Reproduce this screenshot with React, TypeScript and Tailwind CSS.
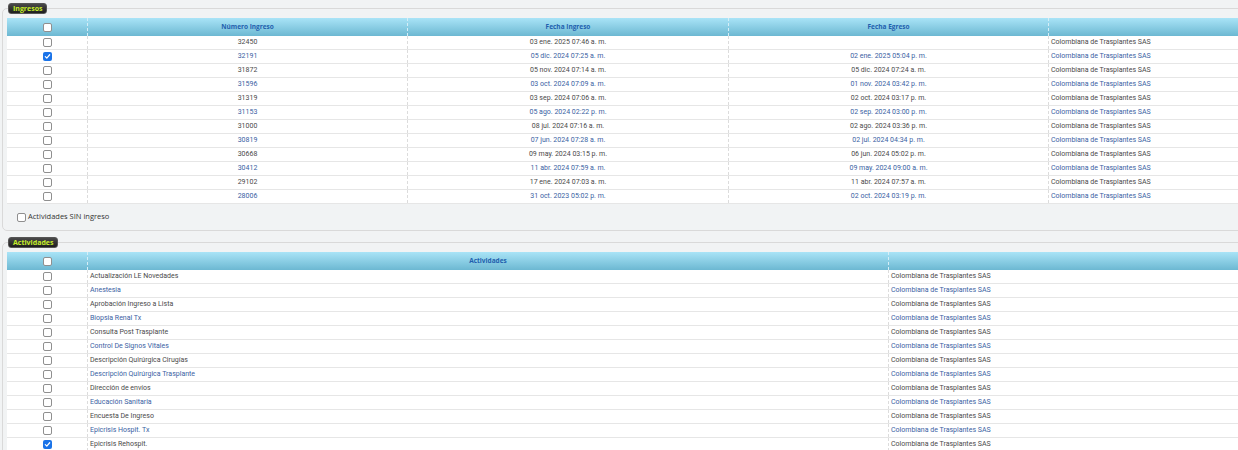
import React from "react";

const ingresos: [string, string, string, boolean][] = [
  ["32450", "03 ene. 2025 07:46 a. m.", "", false],
  ["32191", "05 dic. 2024 07:25 a. m.", "02 ene. 2025 05:04 p. m.", true],
  ["31872", "05 nov. 2024 07:14 a. m.", "05 dic. 2024 07:24 a. m.", false],
  ["31596", "03 oct. 2024 07:09 a. m.", "01 nov. 2024 03:42 p. m.", false],
  ["31319", "03 sep. 2024 07:06 a. m.", "02 oct. 2024 03:17 p. m.", false],
  ["31153", "05 ago. 2024 02:22 p. m.", "02 sep. 2024 03:00 p. m.", false],
  ["31000", "08 jul. 2024 07:16 a. m.", "02 ago. 2024 03:36 p. m.", false],
  ["30819", "07 jun. 2024 07:28 a. m.", "02 jul. 2024 04:34 p. m.", false],
  ["30668", "09 may. 2024 03:15 p. m.", "06 jun. 2024 05:02 p. m.", false],
  ["30412", "11 abr. 2024 07:59 a. m.", "09 may. 2024 09:00 a. m.", false],
  ["29102", "17 ene. 2024 07:03 a. m.", "11 abr. 2024 07:57 a. m.", false],
  ["28006", "31 oct. 2023 05:02 p. m.", "02 oct. 2024 03:19 p. m.", false],
];

const actividades: [string, boolean][] = [
  ["Actualización LE Novedades", false],
  ["Anestesia", false],
  ["Aprobación Ingreso a Lista", false],
  ["Biopsia Renal Tx", false],
  ["Consulta Post Trasplante", false],
  ["Control De Signos Vitales", false],
  ["Descripción Quirúrgica Cirugías", false],
  ["Descripción Quirúrgica Trasplante", false],
  ["Dirección de envíos", false],
  ["Educación Sanitaria", false],
  ["Encuesta De Ingreso", false],
  ["Epicrisis Hospit. Tx", false],
  ["Epicrisis Rehospit.", true],
];

function Check({ checked }: { checked?: boolean }) {
  if (checked) {
    return (
      <span className="inline-flex h-[9px] w-[9px] items-center justify-center rounded-[2px] bg-[#1a73e8]">
        <svg width="7" height="7" viewBox="0 0 8 8">
          <path d="M1.5 4.2 L3.2 5.8 L6.5 2" stroke="white" strokeWidth="1.4" fill="none" strokeLinecap="round" strokeLinejoin="round" />
        </svg>
      </span>
    );
  }
  return <span className="inline-block h-[9px] w-[9px] rounded-[2px] border border-[#8f8f8f] bg-white" />;
}

const sep = "border-l border-dashed border-[#dcdcdc]";
const hsep = "border-l border-dashed border-[#d6eef7]";

function Legend({ text }: { text: string }) {
  return (
    <legend className="ml-[1px] rounded-[3px] border border-[#555] bg-gradient-to-b from-[#4a4a4a] to-[#1e1e1e] px-[4px] text-[7px] font-bold leading-[9px] text-[#c6ef2a] [font-family:'Open_Sans',sans-serif]">
      {text}
    </legend>
  );
}

export default function App() {
  return (
    <div className="h-[450px] w-[1238px] overflow-hidden bg-[#f1f3f4] pl-[2px] pt-[3px] [font-family:Roboto,'Liberation_Sans',sans-serif]">
      <fieldset className="w-[1320px] rounded-tl-[5px] rounded-bl-[5px] border border-[#d9d9d9] pl-[4px] pt-[4px]">
        <Legend text="Ingresos" />
        <div className="w-[1300px]">
          <div className="grid h-[18px] grid-cols-[80px_320px_321px_320px_1fr] bg-gradient-to-b from-[#a9e4f7] to-[#6cb8d2] text-[6.5px] font-bold text-[#1f5fae] [font-family:'Open_Sans',sans-serif]">
            <div className="flex items-center justify-center"><Check /></div>
            <div className={`flex items-center justify-center ${hsep}`}>Número Ingreso</div>
            <div className={`flex items-center justify-center ${hsep}`}>Fecha Ingreso</div>
            <div className={`flex items-center justify-center ${hsep}`}>Fecha Egreso</div>
            <div className={hsep}></div>
          </div>
          {ingresos.map(([n, fi, fe, c], i) => {
            const color = i % 2 === 1 ? "text-[#3a62a3]" : "text-[#4a4a4a]";
            return (
              <div key={n} className={`grid h-[14px] grid-cols-[80px_320px_321px_320px_1fr] border-b border-[#e6e6e6] bg-white text-[7px] ${color}`}>
                <div className="flex items-center justify-center"><Check checked={c} /></div>
                <div className={`flex items-center justify-center ${sep}`}>{n}</div>
                <div className={`flex items-center justify-center ${sep}`}>{fi}</div>
                <div className={`flex items-center justify-center ${sep}`}>{fe}</div>
                <div className={`flex items-center pl-[2px] ${sep}`}>Colombiana de Trasplantes SAS</div>
              </div>
            );
          })}
        </div>
        <div className="flex h-[26px] items-center gap-[2px] pl-[10px] text-[7.5px] text-[#333] [font-family:'Open_Sans',sans-serif]">
          <Check />
          <span>Actividades SIN ingreso</span>
        </div>
      </fieldset>

      <fieldset className="mt-[6px] w-[1320px] rounded-tl-[5px] border border-[#d9d9d9] pl-[4px] pt-[4px]">
        <Legend text="Actividades" />
        <div className="w-[1300px]">
          <div className="grid h-[18px] grid-cols-[80px_801px_1fr] bg-gradient-to-b from-[#a9e4f7] to-[#6cb8d2] text-[6.5px] font-bold text-[#1f5fae] [font-family:'Open_Sans',sans-serif]">
            <div className="flex items-center justify-center"><Check /></div>
            <div className={`flex items-center justify-center ${hsep}`}>Actividades</div>
            <div className={hsep}></div>
          </div>
          {actividades.map(([a, c], i) => {
            const color = i % 2 === 1 ? "text-[#3a62a3]" : "text-[#4a4a4a]";
            return (
              <div key={a} className={`grid h-[14px] grid-cols-[80px_801px_1fr] border-b border-[#e6e6e6] bg-white text-[7px] ${color}`}>
                <div className="flex items-center justify-center"><Check checked={c} /></div>
                <div className={`flex items-center pl-[2px] ${sep}`}>{a}</div>
                <div className={`flex items-center pl-[2px] ${sep}`}>Colombiana de Trasplantes SAS</div>
              </div>
            );
          })}
        </div>
      </fieldset>
    </div>
  );
}
